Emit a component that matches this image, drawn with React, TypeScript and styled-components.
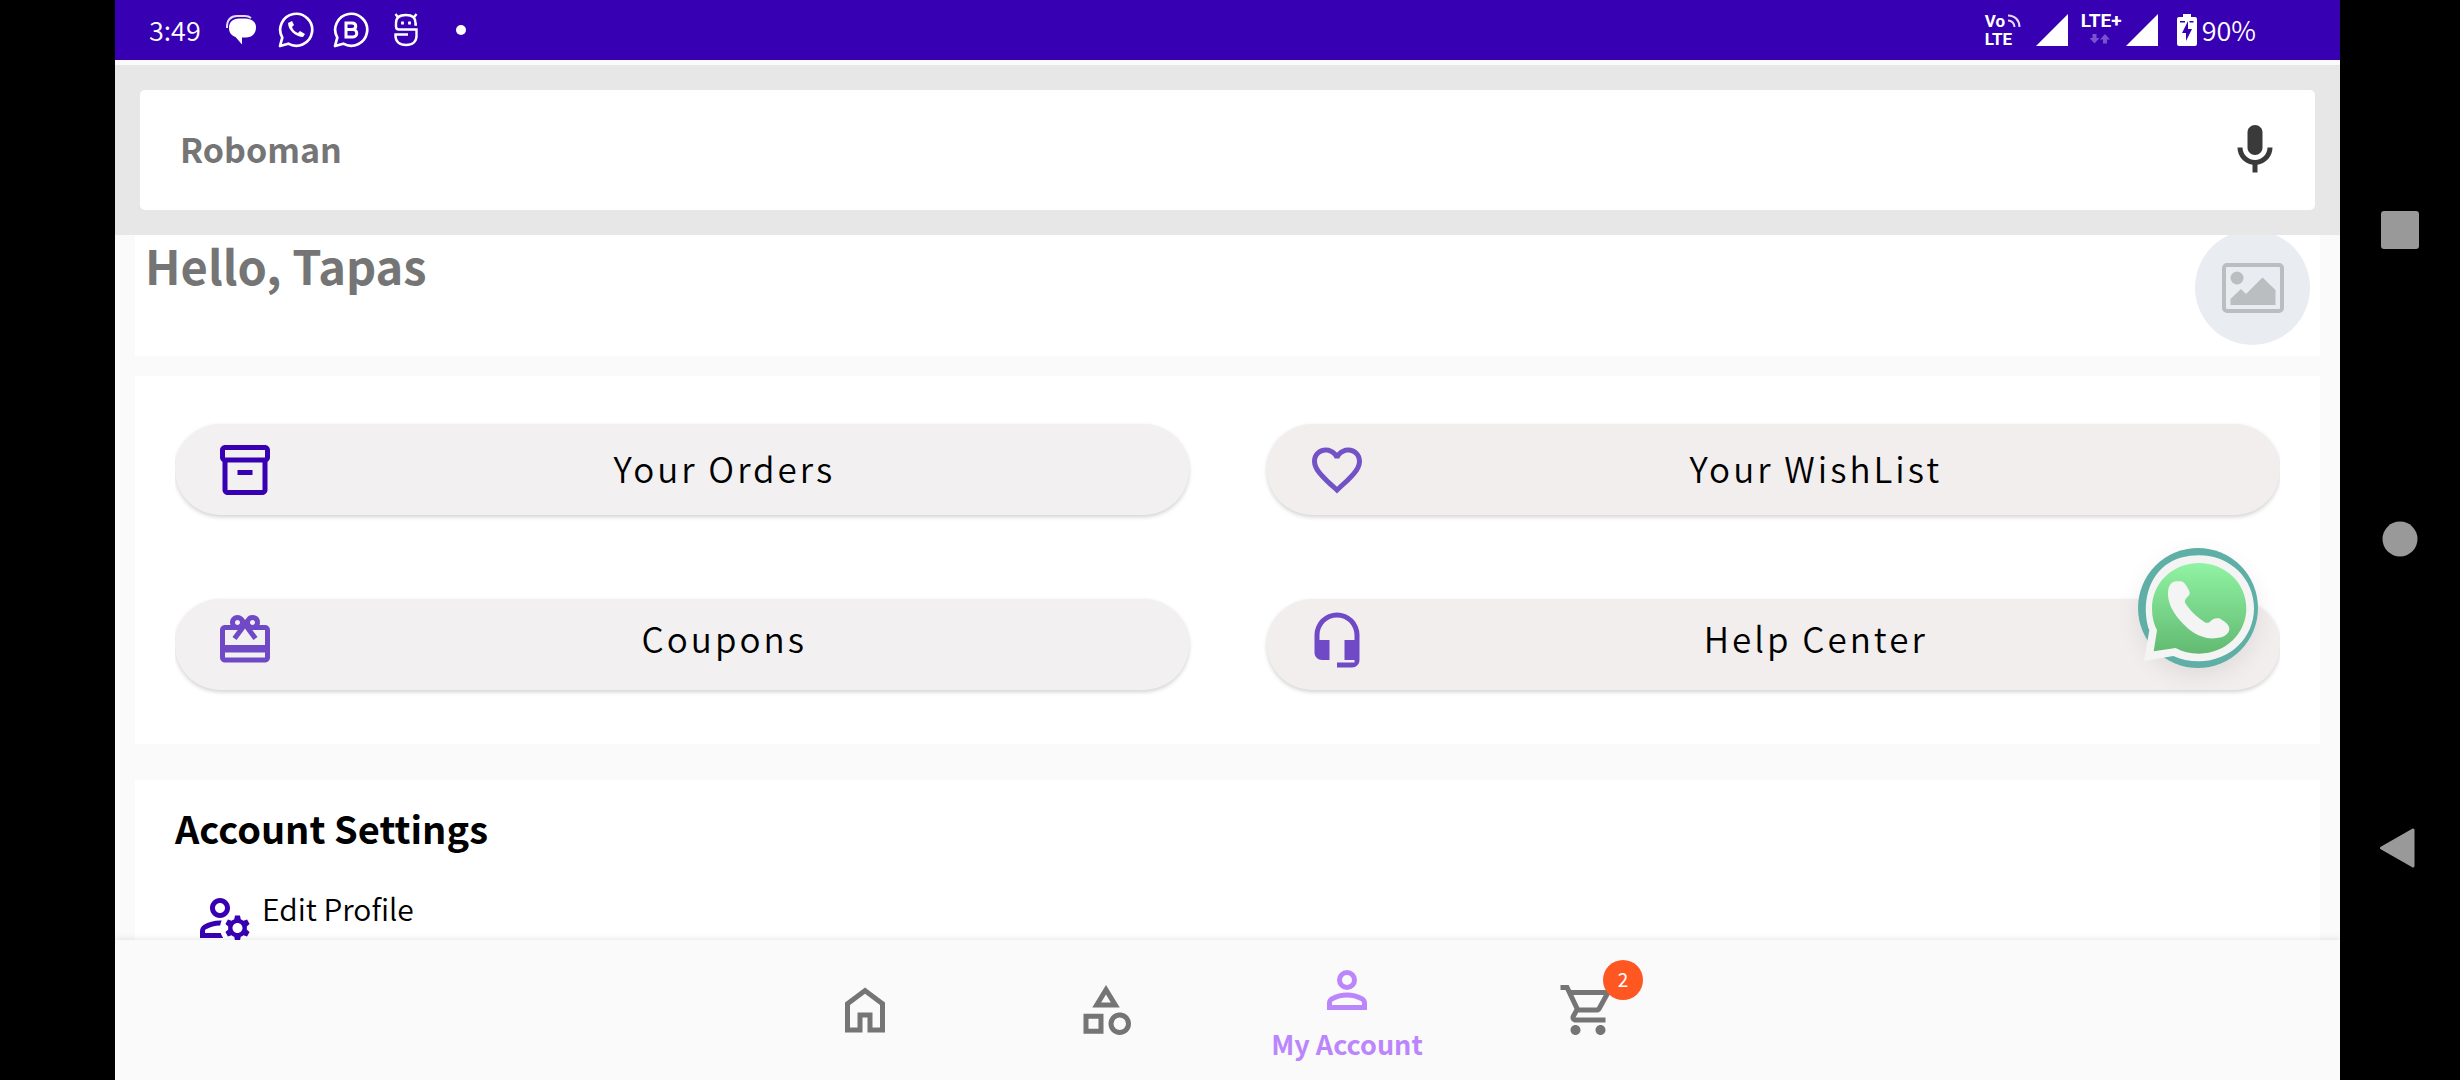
import React from 'react';
import styled, { createGlobalStyle } from 'styled-components';
import { MdFavoriteBorder, MdHeadsetMic, MdOutlineCategory, MdOutlineInventory2, MdOutlineManageAccounts, MdOutlineShoppingCart, MdRedeem } from 'react-icons/md';

const Global = createGlobalStyle`
  *, *::before, *::after { box-sizing: border-box; }
  body { margin: 0; background: #000; font-family: "Noto Sans CJK SC", "Noto Sans", sans-serif; }
  button, input { font: inherit; color: inherit; border: 0; margin: 0; padding: 0; background: none; }
  h1, h2 { margin: 0; }
  a { color: inherit; text-decoration: none; }
  svg { display: block; flex: none; }
`;

const Device = styled.div`
  display: grid;
  grid-template-columns: 115px minmax(0, 1fr) 120px;
  height: 100vh;
  overflow: hidden;
`;

const Screen = styled.div`
  grid-column: 2;
  position: relative;
  display: flex;
  flex-direction: column;
  min-height: 0;
  background: #fafafa;
`;

const StatusBar = styled.header`
  display: flex;
  justify-content: space-between;
  flex: none;
  height: 60px;
  padding: 0 84px 0 34px;
  background: #3700b3;
  color: #fff;
  font-size: 27px;
  font-weight: 350;
  line-height: 56px;
`;

const StatusGroup = styled.div<{ $gap: number }>`
  display: flex;
  align-items: center;
  gap: ${(p) => p.$gap}px;
`;

const Notifications = styled.div`
  display: grid;
  grid-template-columns: repeat(5, 55px);
  justify-items: center;
  align-items: center;
`;

const Battery = styled.span`
  display: flex;
  align-items: center;
  gap: 5px;
  padding-left: 6px;
`;

const Network = styled.span<{ $size: number }>`
  display: flex;
  flex-direction: column;
  width: 38px;
  font-family: Roboto, sans-serif;
  font-size: ${(p) => p.$size}px;
  font-weight: 700;
  line-height: 18px;
  white-space: nowrap;
`;

const NetworkRow = styled.span<{ $center?: boolean }>`
  display: flex;
  justify-content: ${(p) => (p.$center ? 'center' : 'flex-start')};
  align-items: center;
  gap: 2px;
  height: 18px;
`;

const Toolbar = styled.form`
  flex: none;
  margin-top: 5px;
  padding: 25px;
  background: #e7e7e7;
`;

const SearchBox = styled.label`
  display: flex;
  align-items: center;
  height: 120px;
  padding: 0 30px 0 40px;
  border-radius: 5px;
  background: #fff;
`;

const SearchInput = styled.input`
  flex: 1;
  min-width: 0;
  height: 54px;
  padding-bottom: 4px;
  outline: 0;
  font-size: 34px;
  font-weight: 700;
  &::placeholder { color: #757575; opacity: 1; }
`;

const IconButton = styled.button`
  display: block;
  color: #3a3a3a;
`;

const Content = styled.main`
  flex: 1;
  min-height: 0;
  overflow: hidden;
  padding: 0 20px;
`;

const Greeting = styled.section`
  display: flex;
  justify-content: space-between;
  align-items: flex-start;
  height: 121px;
  padding: 0 10px;
  background: #fff;
`;

const Hello = styled.h1`
  font-size: 47px;
  line-height: 60px;
  font-weight: 700;
  color: #757575;
`;

const Avatar = styled.div`
  display: flex;
  align-items: center;
  justify-content: center;
  width: 115px;
  height: 115px;
  margin-top: -5px;
  border-radius: 50%;
  background: #e9edf1;
`;

const Actions = styled.section`
  margin-top: 20px;
  padding: 48px 40px 54px;
  background: #fff;
`;

const ActionGrid = styled.div`
  display: grid;
  grid-template-columns: 1fr 1fr;
  gap: 84px 78px;
  clip-path: inset(-12px 0);
`;

const Pill = styled.button<{ $ink: string; $tone: string; $lift?: boolean }>`
  display: flex;
  align-items: center;
  height: 91px;
  padding: 0 15px ${(p) => (p.$lift ? 10 : 0)}px 40px;
  border-radius: 46px;
  background: ${(p) => p.$tone};
  box-shadow: 0 2px 4px rgba(0, 0, 0, 0.18);
  svg { color: ${(p) => p.$ink}; }
`;

const PillText = styled.span`
  flex: 1;
  padding-bottom: 4px;
  text-align: center;
  font-size: 35px;
  font-weight: 350;
  line-height: 50px;
  letter-spacing: 3px;
  color: #000;
`;

const Settings = styled.section`
  margin-top: 36px;
  padding: 24px 40px;
  background: #fff;
`;

const SettingsTitle = styled.h2`
  font-size: 38px;
  line-height: 48px;
  font-weight: 700;
  color: #000;
`;

const SettingsLink = styled.a`
  display: flex;
  gap: 7px;
  margin-top: 36px;
  padding-left: 20px;
  font-size: 30px;
  font-weight: 350;
  line-height: 40px;
  color: #000;
  svg { color: #3700b3; }
`;

const BottomNav = styled.nav`
  position: relative;
  display: flex;
  justify-content: center;
  flex: none;
  height: 140px;
  padding-right: 2px;
  background: #fafafa;
  box-shadow: 0 -1px 6px rgba(0, 0, 0, 0.1);
`;

const NavItem = styled.a<{ $active?: boolean }>`
  display: flex;
  flex-direction: column;
  align-items: center;
  justify-content: center;
  width: 241px;
  color: ${(p) => (p.$active ? '#bb86fc' : '#757575')};
`;

const NavLabel = styled.span`
  padding-top: 8px;
  font-size: 27px;
  line-height: 32px;
  font-weight: 700;
`;

const BadgeHost = styled.span`
  position: relative;
`;

const Badge = styled.span`
  position: absolute;
  left: 45px;
  top: -20px;
  width: 40px;
  height: 40px;
  border-radius: 50%;
  background: #ff5722;
  color: #fff;
  font-size: 19px;
  line-height: 38px;
  text-align: center;
`;

const ChatFab = styled.button`
  position: absolute;
  right: 82px;
  top: 548px;
  width: 120px;
  height: 120px;
  border-radius: 50%;
  box-shadow: 0 8px 24px rgba(0, 0, 0, 0.08);
`;

const SystemNav = styled.nav`
  grid-column: 3;
  display: flex;
  flex-direction: column;
  align-items: center;
  justify-content: space-between;
  padding: 211px 0 212px;
`;

const glyph = { width: 60, height: 60, viewBox: '0 0 24 24', fill: 'currentColor' };

const MessageIcon = () => (
  <svg width="32" height="32" viewBox="0 0 32 32" fill="#fff">
    <path d="M2 14C1.500 6 6 2 12 2h8c3 0 4.500 .8 6 2" fill="none" stroke="#e5dcf6" strokeWidth="2" />
    <path d="M14 4.500h6c7 0 11 3.500 11 9 0 6-4 10-10 10h-4v7L10.500 23C6 21.500 4 18 4 14 4 8 8 4.500 14 4.500z" />
  </svg>
);

const Bubble = ({ children }: { children: React.ReactNode }) => (
  <svg width="36" height="36" viewBox="0 0 36 36" fill="none" stroke="#fff" strokeWidth="2.700">
    <path d="M2 34l2.300-8.300A16 16 0 1 1 10.300 31.700z" strokeLinejoin="round" />
    {children}
  </svg>
);

const RobotIcon = () => (
  <svg width="24" height="34" viewBox="0 0 24 34" fill="none" stroke="#fff" strokeWidth="2.400">
    <path d="M23 11.500h-1.500V10c0-5-3-8-9.500-8S2 5 2 10v3.500C2 15.500 3.500 16.500 5 16.500h17.500V23c0 5.500-4 9-10.500 9S1.500 28.500 1.500 23v-1.500H14M1.500 1l3 4M22.500 1l-3 4" />
    <path d="M8.500 8.500v3M15.500 8.500v3" strokeWidth="2.800" />
  </svg>
);

const WavesIcon = () => (
  <svg width="14" height="14" viewBox="0 0 14 14" fill="none" stroke="#e5dcf6" strokeWidth="2">
    <path d="M1 1.500c7 0 11.500 5 11.500 11.500M1 6.500c4 0 6.500 3 6.500 6.500" />
  </svg>
);

const TrafficIcon = () => (
  <svg width="20" height="10" viewBox="0 0 20 10" fill="#7a52cf">
    <path d="M2.500 0h4v4h3L4.500 9.500-.5 4h3zM13 9.500h4v-4h3L15 0l-5 5.500h3z" />
  </svg>
);

const SignalIcon = () => (
  <svg width="32" height="32" viewBox="0 0 32 32" fill="#fff"><path d="M32 0v32H0z" /></svg>
);

const BatteryIcon = () => (
  <svg width="20" height="32" viewBox="0 0 20 32">
    <path d="M6 0h8v3h4a2 2 0 0 1 2 2v25a2 2 0 0 1-2 2H2a2 2 0 0 1-2-2V5a2 2 0 0 1 2-2h4z" fill="#fff" />
    <path d="M11 7L5 19h4v8l6-12h-4zM3 7h5v1.500H3zM12.500 7h4v1.500h-4z" fill="#3700b3" />
  </svg>
);

const WhatsAppLogo = () => (
  <svg width="120" height="120" viewBox="234 443 360 360" overflow="visible">
    <defs>
      <linearGradient id="leaf" x1="0" y1="0" x2="0" y2="1">
        <stop offset="0" stopColor="#90f3a3" />
        <stop offset="1" stopColor="#62ba71" />
      </linearGradient>
    </defs>
    <circle cx="414" cy="623" r="180" fill="#5fafa7" />
    <path d="M252 782L268 690C238 600 272 465 417 465C510 465 582 535 582 624C582 712 510 783 417 783C388 783 362 777 340 767z" fill="#f4f4f4" />
    <path d="M281 753L291 690C281 670 276 650 276 624C276 548 338 488 417 488C496 488 559 548 559 624C559 700 496 760 417 760C390 760 367 754 347 743z" fill="url(#leaf)" />
    <path d="M347 543C330 545 323 562 324 585C326 620 350 655 385 685C410 706 440 716 465 714C495 712 508 700 508 684C506 672 495 664 478 654C466 652 458 656 452 662C446 669 440 669 432 664C410 650 390 630 378 612C373 604 373 600 380 592C388 585 391 580 388 573C382 560 372 542 362 543z" fill="#f4f4f4" />
  </svg>
);

const actions = [
  { label: 'Your Orders', icon: MdOutlineInventory2, ink: '#3700b3', tone: '#f2f0f1' },
  { label: 'Your WishList', icon: MdFavoriteBorder, ink: '#7352c5', tone: '#f2eeee' },
  { label: 'Coupons', icon: MdRedeem, ink: '#704ac6', tone: '#f2f0f1', lift: true },
  { label: 'Help Center', icon: MdHeadsetMic, ink: '#704ac6', tone: '#f2eeee', lift: true },
];

export default function App() {
  return (
    <>
      <Global />
      <Device>
        <Screen>
          <StatusBar>
            <StatusGroup $gap={13}>
              <span>3:49</span>
              <Notifications>
                <MessageIcon />
                <Bubble>
                  <path d="M10 11c0 7 8 14 15 14l2-3-5-3-2 2c-3-1-5-3-6-6l2-2-2-4z" fill="#fff" stroke="none" />
                </Bubble>
                <Bubble>
                  <path d="M13 11h6c5 0 5 6.500 0 6.500h-6zM13 17.500h7c5 0 5 7.500 0 7.500h-7z" strokeWidth="3" />
                </Bubble>
                <RobotIcon />
                <svg width="10" height="10" viewBox="0 0 10 10"><circle cx="5" cy="5" r="5" fill="#fff" /></svg>
              </Notifications>
            </StatusGroup>
            <StatusGroup $gap={13}>
              <Network $size={17}>
                <NetworkRow>Vo<WavesIcon /></NetworkRow>
                <NetworkRow>LTE</NetworkRow>
              </Network>
              <SignalIcon />
              <StatusGroup $gap={7}>
                <Network $size={19}>
                  <NetworkRow>LTE+</NetworkRow>
                  <NetworkRow $center><TrafficIcon /></NetworkRow>
                </Network>
                <SignalIcon />
              </StatusGroup>
              <Battery><BatteryIcon />90%</Battery>
            </StatusGroup>
          </StatusBar>

          <Toolbar>
            <SearchBox>
              <SearchInput type="text" placeholder="Roboman" aria-label="Search" />
              <IconButton type="button" aria-label="Voice search">
                <svg {...glyph}>
                  <path d="M12 14c1.660 0 3-1.340 3-3V5c0-1.660-1.340-3-3-3S9 3.340 9 5v6c0 1.660 1.340 3 3 3z" />
                  <path d="M17 11c0 2.760-2.240 5-5 5s-5-2.240-5-5H5c0 3.530 2.610 6.430 6 6.920V21h2v-3.080c3.390-.49 6-3.390 6-6.920h-2z" />
                </svg>
              </IconButton>
            </SearchBox>
          </Toolbar>

          <Content>
            <Greeting>
              <Hello>Hello, Tapas</Hello>
              <Avatar>
                <svg width="62" height="50" viewBox="0 0 62 50" fill="#babec1">
                  <rect x="2" y="2" width="58" height="46" rx="3" fill="none" stroke="#babec1" strokeWidth="4" />
                  <circle cx="15" cy="15" r="6.500" />
                  <path d="M8.500 42v-6L19 26l5 5L40.500 14.500 53.500 27v15z" />
                </svg>
              </Avatar>
            </Greeting>

            <Actions>
              <ActionGrid>
                {actions.map(({ label, icon: Icon, ink, tone, lift }) => (
                  <Pill key={label} type="button" $ink={ink} $tone={tone} $lift={lift}>
                    <Icon size={60} />
                    <PillText>{label}</PillText>
                  </Pill>
                ))}
              </ActionGrid>
            </Actions>

            <Settings>
              <SettingsTitle>Account Settings</SettingsTitle>
              <SettingsLink href="#profile">
                <MdOutlineManageAccounts size={60} />
                Edit Profile
              </SettingsLink>
            </Settings>
          </Content>

          <BottomNav>
            <NavItem href="#home" aria-label="Home">
              <svg {...glyph}><path d="M6 19h3v-6h6v6h3v-9l-6-4.500L6 10zM4 21V9l8-6 8 6v12h-7v-6h-2v6z" /></svg>
            </NavItem>
            <NavItem href="#categories" aria-label="Categories"><MdOutlineCategory size={60} /></NavItem>
            <NavItem href="#account" $active>
              <svg {...glyph}><path fillRule="evenodd" d="M12 12a4 4 0 1 1 0-8 4 4 0 0 1 0 8zm0-2a2 2 0 1 0 0-4 2 2 0 0 0 0 4zM4 20v-2.800c0-1.100.6-2.100 1.600-2.650C7.600 13.500 9.800 13 12 13s4.400.5 6.400 1.550c1 .55 1.600 1.550 1.600 2.650V20zm2-2h12v-.8c0-.4-.2-.7-.5-.85C15.700 15.450 13.900 15 12 15s-3.700.45-5.500 1.350c-.3.150-.5.450-.5.850z" /></svg>
              <NavLabel>My Account</NavLabel>
            </NavItem>
            <NavItem href="#cart" aria-label="Cart, 2 items">
              <BadgeHost>
                <MdOutlineShoppingCart size={60} />
                <Badge>2</Badge>
              </BadgeHost>
            </NavItem>
          </BottomNav>

          <ChatFab type="button" aria-label="Chat on WhatsApp"><WhatsAppLogo /></ChatFab>
        </Screen>

        <SystemNav aria-label="System">
          <IconButton type="button" aria-label="Recent apps">
            <svg width="38" height="38" viewBox="0 0 38 38"><rect width="38" height="38" rx="3" fill="#999" /></svg>
          </IconButton>
          <IconButton type="button" aria-label="Home screen">
            <svg width="36" height="36" viewBox="0 0 36 36"><circle cx="18" cy="18" r="17.500" fill="#999" /></svg>
          </IconButton>
          <IconButton type="button" aria-label="Back">
            <svg width="40" height="40" viewBox="0 0 40 40"><path d="M1.500 20L33 2v36z" fill="#999" stroke="#999" strokeWidth="3" strokeLinejoin="round" /></svg>
          </IconButton>
        </SystemNav>
      </Device>
    </>
  );
}
